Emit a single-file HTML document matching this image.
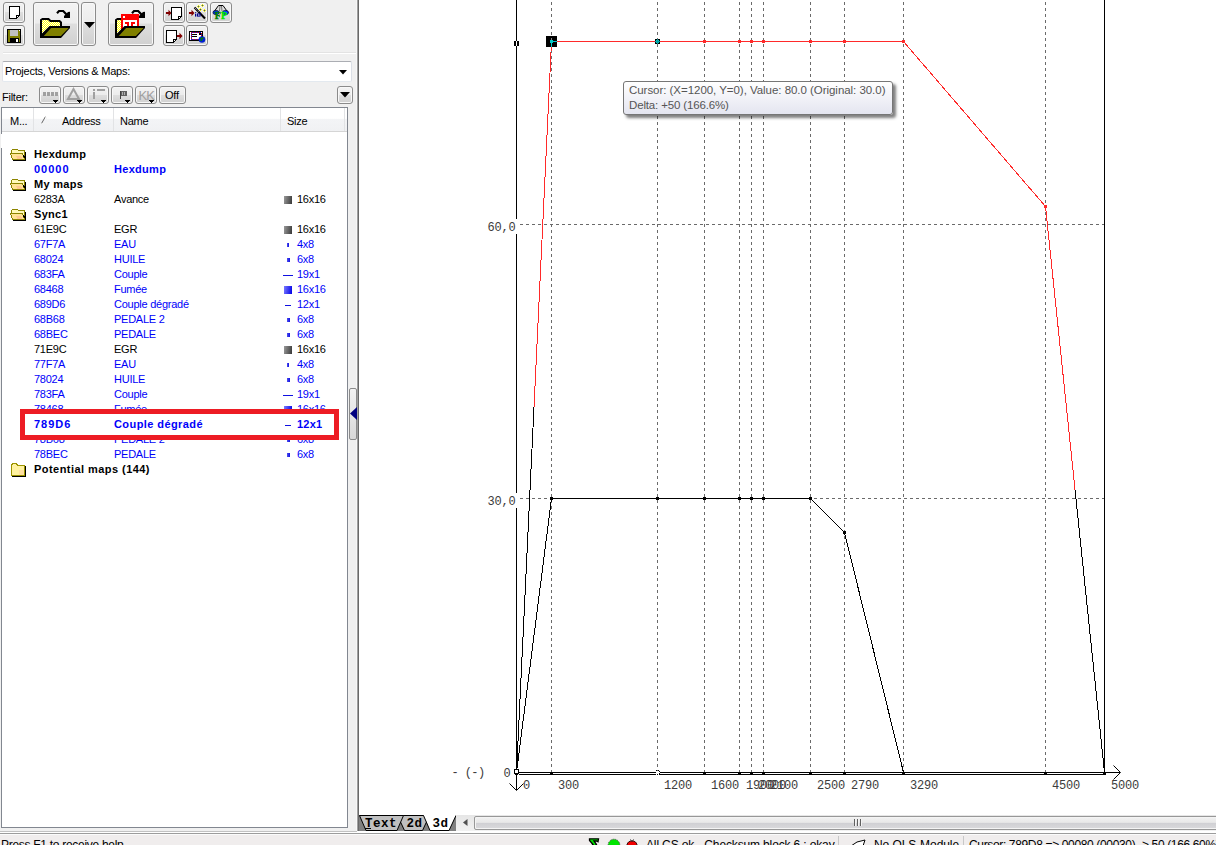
<!DOCTYPE html>
<html lang="en"><head><meta charset="utf-8"><title>WinOLS</title>
<style>
*{box-sizing:border-box;margin:0;padding:0}
html,body{width:1216px;height:845px;overflow:hidden;background:#fff}
body{position:relative;font-family:"Liberation Sans",sans-serif;font-size:11px;color:#000}
.abs{position:absolute}
#left{position:absolute;left:0;top:0;width:357px;height:831px;background:#f0f0f0}
.btn{position:absolute;border:1px solid #8b8b8b;border-radius:3px;box-shadow:inset 0 0 0 1px #f8f8f8;
 background:linear-gradient(#f3f3f3 0%,#ececec 48%,#dedede 50%,#d0d0d0 100%)}
.btn svg{position:absolute;left:0;top:0;overflow:visible}
.t{position:absolute;white-space:nowrap;line-height:15px;height:15px;letter-spacing:-.25px}
.b{letter-spacing:.3px}
.bl{color:#0000fa}
.b{font-weight:bold}
.tt{font-size:11.500px;color:#555;letter-spacing:0}
.st .t{font-size:12px;line-height:14px}
.mono{font-family:"Liberation Mono",monospace}
</style></head>
<body>
<div id="left">
<div class="btn" style="left:3px;top:2px;width:22px;height:21px;"><svg width="20" height="19" viewBox="0 0 20 19" shape-rendering="crispEdges"><path d="M5.5 3.5h10v9l-3 3h-7z" fill="#fff" stroke="#000"/><path d="M12.5 15v-2.5h3" fill="none" stroke="#000"/></svg></div>
<div class="btn" style="left:3px;top:25px;width:22px;height:21px;"><svg width="20" height="19" viewBox="0 0 20 19" shape-rendering="crispEdges"><rect x="3.5" y="3.5" width="13" height="13" fill="#808000" stroke="#000"/><rect x="6" y="4" width="8" height="6" fill="#c0c0c0"/><rect x="6" y="12" width="9" height="4" fill="#000"/><rect x="12" y="13" width="2" height="3" fill="#fff"/><rect x="15" y="4" width="1" height="1" fill="#fff"/></svg></div>
<div class="btn" style="left:33px;top:2px;width:46px;height:44px;"><svg width="44" height="42" viewBox="0 0 44 42" shape-rendering="crispEdges"><defs><pattern id="dz" width="2" height="2" patternUnits="userSpaceOnUse"><rect width="2" height="2" fill="#fff"/><rect width="1" height="1" fill="#ff0"/><rect x="1" y="1" width="1" height="1" fill="#ff0"/></pattern></defs><path d="M8 17h6l2 2h10v5h-10l-8 9z" fill="url(#dz)"/><path d="M7 34V17L8.500 16H14.500L16.500 18H25.500L27 19.500V24" fill="none" stroke="#000" stroke-width="2" shape-rendering="auto"/><path d="M6 35V32.500L15.500 23H36V25L27 35z" fill="#000" shape-rendering="auto"/><path d="M9.800 33L17.100 25H34.700L26.900 33z" fill="#808000" shape-rendering="auto"/><path d="M23 10.200L25 8H29.200L33.500 12.500" fill="none" stroke="#000" stroke-width="2.200" shape-rendering="auto"/><path d="M36 8.800V15H30V13L34 9z" fill="#000" shape-rendering="auto"/></svg></div>
<div class="btn" style="left:81px;top:2px;width:15px;height:44px;"><svg width="13" height="42" viewBox="0 0 13 42" shape-rendering="crispEdges"><path d="M2 19h11l-5.500 6z" fill="#000" shape-rendering="auto"/></svg></div>
<div class="btn" style="left:108px;top:2px;width:46px;height:44px;"><svg width="44" height="42" viewBox="0 0 44 42" shape-rendering="crispEdges"><rect x="8" y="17" width="5" height="16" fill="url(#dz)"/><path d="M7 34V17L8.500 16H13" fill="none" stroke="#000" stroke-width="2" shape-rendering="auto"/><path d="M23 10.200L25 8H29.200L33.500 12.500" fill="none" stroke="#000" stroke-width="2.200" shape-rendering="auto"/><path d="M36 8.800V15H30V13L34 9z" fill="#000" shape-rendering="auto"/><rect x="12" y="11" width="18" height="20" fill="#f00"/><rect x="14" y="13" width="2" height="2" fill="#fff"/><rect x="14" y="17" width="14" height="8" fill="#fff"/><rect x="16" y="19" width="4" height="2" fill="#f00"/><rect x="18" y="19" width="2" height="5" fill="#f00"/><rect x="22" y="19" width="4" height="2" fill="#f00"/><rect x="22" y="19" width="2" height="5" fill="#f00"/><path d="M6 35V32.500L15.500 23H36V25L27 35z" fill="#000" shape-rendering="auto"/><path d="M9.800 33L17.100 25H34.700L26.900 33z" fill="#808000" shape-rendering="auto"/></svg></div>
<div class="btn" style="left:163px;top:2px;width:22px;height:21px;"><svg width="20" height="19" viewBox="0 0 20 19" shape-rendering="crispEdges"><path d="M2 9h2.500v-2.200l3 3.200l-3 3.200v-2.200h-2.500z" fill="#800000" shape-rendering="auto"/><path d="M7.5 4.5h10v9l-3 3h-7z" fill="#fff" stroke="#000"/><path d="M14.5 16v-2.5h3" fill="none" stroke="#000"/></svg></div>
<div class="btn" style="left:186px;top:2px;width:22px;height:21px;"><svg width="20" height="19" viewBox="0 0 20 19" shape-rendering="crispEdges"><path d="M2 9h2.500v-2.200l3 3.200l-3 3.200v-2.200h-2.500z" fill="#800000" shape-rendering="auto"/><path d="M7.500 4.500l10.500 11" stroke="#000" stroke-width="2" shape-rendering="auto"/><path d="M8 5l4 4.200" stroke="#fff" stroke-width=".8" stroke-dasharray="1 1" shape-rendering="auto"/><rect x="8" y="9.200" width="1.300" height="1" fill="#000090" shape-rendering="auto"/><rect x="8" y="10.800" width="1.300" height="2.800" fill="#000090" shape-rendering="auto"/><rect x="10.500" y="10.900" width="2.600" height="2.200" fill="none" stroke="#000090" shape-rendering="auto"/><path d="M10 3h3v1h-3zM11 2h1v3h-1z" fill="#f0f000"/><rect x="11" y="3" width="1" height="1" fill="#2030c0"/><path d="M14 2h3v1h-3zM15 1h1v3h-1z" fill="#f0f000"/><rect x="15" y="2" width="1" height="1" fill="#2030c0"/><path d="M12 6h3v1h-3zM13 5h1v3h-1z" fill="#f0f000"/><rect x="13" y="6" width="1" height="1" fill="#2030c0"/><path d="M16 7h3v1h-3zM17 6h1v3h-1z" fill="#f0f000"/><rect x="17" y="7" width="1" height="1" fill="#2030c0"/></svg></div>
<div class="btn" style="left:210px;top:2px;width:22px;height:21px;"><svg width="20" height="19" viewBox="0 0 20 19" shape-rendering="crispEdges"><path d="M2.500 9.500L7.500 2.500H12L17 9.500" fill="#e0e0e0" stroke="#000" shape-rendering="auto"/><path d="M9 3L8.500 8M10.500 3L11 8" stroke="#555" stroke-width=".8" fill="none" shape-rendering="auto"/><rect x="2" y="7.500" width="6" height="4" rx="2" fill="#0030ff" stroke="#000" stroke-width=".6" shape-rendering="auto"/><rect x="11.500" y="7.500" width="6" height="4" rx="2" fill="#0030ff" stroke="#000" stroke-width=".6" shape-rendering="auto"/><text x="3.800" y="15.800" font-family="Liberation Serif,serif" font-weight="bold" font-size="10" shape-rendering="auto" stroke-width=".4"><tspan fill="#008000" stroke="#008000">F</tspan><tspan fill="#00e800" stroke="#00e800">P</tspan></text></svg></div>
<div class="btn" style="left:163px;top:25px;width:22px;height:21px;"><svg width="20" height="19" viewBox="0 0 20 19" shape-rendering="crispEdges"><path d="M2.5 4.5h10v9l-3 3h-7z" fill="#fff" stroke="#000"/><path d="M9.5 16v-2.5h3" fill="none" stroke="#000"/><path d="M13 9h2.500v-2.200l3 3.200l-3 3.200v-2.200h-2.500z" fill="#800000" shape-rendering="auto"/></svg></div>
<div class="btn" style="left:186px;top:25px;width:22px;height:21px;"><svg width="20" height="19" viewBox="0 0 20 19" shape-rendering="crispEdges"><rect x="2.500" y="5.500" width="13" height="9" fill="#fff" stroke="#000"/><rect x="4" y="6.500" width="10" height="7" fill="none" stroke="#e00000" stroke-dasharray="1 1"/><rect x="4" y="6.500" width="10" height="7" fill="none" stroke="#0020e0" stroke-dasharray="1 1" stroke-dashoffset="1"/><rect x="5" y="8" width="5" height="1" fill="#000"/><rect x="5" y="10" width="5" height="1" fill="#000"/><rect x="12" y="7" width="2" height="2" fill="#000"/><circle cx="15" cy="13.500" r="3.300" fill="#0020d0" shape-rendering="auto"/><path d="M13.500 11.500h3v1.500h-1.500v2h-1.500z" fill="#008000" shape-rendering="auto"/></svg></div>
<div class="abs" style="left:3px;top:53px;width:353px;height:1px;background:#fff"></div>
<div class="abs" style="left:3px;top:52px;width:353px;height:1px;background:#e3e3e3"></div>
<div class="abs" style="left:2px;top:61px;width:350px;height:21px;background:#fff;border:1px solid #abadb3;border-radius:2px;border-color:#abadb3 #dbdfe6 #e3e9ef #e2e3ea"></div>
<div class="t" style="left:5px;top:64px;font-size:11px">Projects, Versions &amp; Maps:</div>
<svg class="abs" style="left:339px;top:70px" width="8" height="5"><path d="M0 0h8l-4 4.500z" fill="#000"/></svg>
<div class="t" style="left:2px;top:90px">Filter:</div>
<div class="btn" style="left:39px;top:86px;width:22px;height:18px;"><svg width="20" height="16" viewBox="0 0 20 16" shape-rendering="crispEdges"><rect x="3" y="5" width="3" height="4" fill="#a0a0a0"/><rect x="7" y="5" width="3" height="4" fill="#a0a0a0"/><rect x="11" y="5" width="3" height="4" fill="#a0a0a0"/><rect x="15" y="5" width="3" height="4" fill="#a0a0a0"/><path d="M13 13h5l-2.500 3z" fill="#000"/></svg></div>
<div class="btn" style="left:63px;top:86px;width:22px;height:18px;"><svg width="20" height="16" viewBox="0 0 20 16" shape-rendering="crispEdges"><path d="M4 12l5.500-10l5.500 10z" fill="none" stroke="#a0a0a0" stroke-width="2" shape-rendering="auto"/><path d="M13 13h5l-2.500 3z" fill="#000"/></svg></div>
<div class="btn" style="left:87px;top:86px;width:22px;height:18px;"><svg width="20" height="16" viewBox="0 0 20 16" shape-rendering="crispEdges"><rect x="5" y="2" width="2" height="2" fill="#a0a0a0"/><rect x="5" y="5" width="2" height="7" fill="#a0a0a0"/><rect x="9" y="2" width="8" height="1.500" fill="#a0a0a0"/><path d="M13 13h5l-2.500 3z" fill="#000"/></svg></div>
<div class="btn" style="left:111px;top:86px;width:22px;height:18px;"><svg width="20" height="16" viewBox="0 0 20 16" shape-rendering="crispEdges"><rect x="8" y="4" width="1" height="8" fill="#404040"/><rect x="9" y="4" width="6" height="5" fill="#606060"/><rect x="10" y="5" width="1" height="3" fill="#b0b0b0"/><rect x="12" y="5" width="1" height="3" fill="#b0b0b0"/><path d="M13 13h5l-2.500 3z" fill="#000"/></svg></div>
<div class="btn" style="left:135px;top:86px;width:22px;height:18px;"><svg width="20" height="16" viewBox="0 0 20 16" shape-rendering="crispEdges"><text x="2.500" y="12.500" font-family="Liberation Sans,sans-serif" font-size="13" fill="#a0a0a0" letter-spacing="-1" shape-rendering="auto">KK</text><path d="M13 13h5l-2.500 3z" fill="#000"/></svg></div>
<div class="btn" style="left:159px;top:86px;width:27px;height:18px;"><div class="t" style="left:5px;top:0px;line-height:16px;font-size:11px">Off</div></div>
<div class="btn" style="left:337px;top:86px;width:16px;height:18px;"><svg width="14" height="16" viewBox="0 0 14 16" shape-rendering="crispEdges"><path d="M2 5h10l-5 5.500z" fill="#000" shape-rendering="auto"/></svg></div>
<div class="abs" style="left:1px;top:107px;width:347px;height:721px;background:#fff;border:1px solid #828790"></div>
<div class="abs" style="left:2px;top:108px;width:345px;height:24px;background:linear-gradient(#fff 0%,#fff 45%,#f3f4f6 50%,#f0f1f3 100%);border-bottom:1px solid #d5d5d5"></div>
<div class="abs" style="left:33px;top:108px;width:1px;height:23px;background:#e2e3e5"></div>
<div class="abs" style="left:113px;top:108px;width:1px;height:23px;background:#e2e3e5"></div>
<div class="abs" style="left:280px;top:108px;width:1px;height:23px;background:#e2e3e5"></div>
<div class="abs" style="left:344px;top:108px;width:1px;height:23px;background:#e2e3e5"></div>
<div class="t" style="left:10px;top:114px">M...</div>
<div class="t" style="left:62px;top:114px">Address</div>
<div class="t" style="left:120px;top:114px">Name</div>
<div class="t" style="left:287px;top:114px">Size</div>
<svg class="abs" style="left:40px;top:115px" width="10" height="10"><path d="M1.500 8.500l4-7" stroke="#666" fill="none"/><path d="M5.500 1.500l3.500 7h-7.500" stroke="#f4f4f4" fill="none"/></svg>
<div class="abs" style="left:1px;top:134px;width:1px;height:14px;background:#fff"></div>
<svg class="abs" style="left:10px;top:147px" width="17" height="15" viewBox="0 0 17 15" shape-rendering="crispEdges"><path d="M1.500 7V3.500l1-1h5l1 1h6v8.500h-12z" fill="#fff9b8" stroke="#8c8400"/><path d="M0.500 6.500h12l2 6h-12z" fill="#ffe494" stroke="#8c8400"/><path d="M6 9h5l1.500 3h-5z" fill="#ffc890"/><path d="M3 13.500h12.500v-9" fill="none" stroke="#000"/><path d="M13.500 8l1 3" fill="none" stroke="#000"/></svg>
<div class="t b" style="left:34px;top:147px">Hexdump</div>
<div class="t b bl" style="left:34px;top:162px;letter-spacing:1px">00000</div>
<div class="t b bl" style="left:114px;top:162px;letter-spacing:.3px">Hexdump</div>
<svg class="abs" style="left:10px;top:177px" width="17" height="15" viewBox="0 0 17 15" shape-rendering="crispEdges"><path d="M1.500 7V3.500l1-1h5l1 1h6v8.500h-12z" fill="#fff9b8" stroke="#8c8400"/><path d="M0.500 6.500h12l2 6h-12z" fill="#ffe494" stroke="#8c8400"/><path d="M6 9h5l1.500 3h-5z" fill="#ffc890"/><path d="M3 13.500h12.500v-9" fill="none" stroke="#000"/><path d="M13.500 8l1 3" fill="none" stroke="#000"/></svg>
<div class="t b" style="left:34px;top:177px">My maps</div>
<div class="t" style="left:34px;top:192px">6283A</div>
<div class="t" style="left:114px;top:192px">Avance</div>
<div class="abs" style="left:284px;top:196px;width:8px;height:8px;background:linear-gradient(100deg,#9a9a9a,#383838)"></div>
<div class="t" style="left:297px;top:192px">16x16</div>
<svg class="abs" style="left:10px;top:207px" width="17" height="15" viewBox="0 0 17 15" shape-rendering="crispEdges"><path d="M1.500 7V3.500l1-1h5l1 1h6v8.500h-12z" fill="#fff9b8" stroke="#8c8400"/><path d="M0.500 6.500h12l2 6h-12z" fill="#ffe494" stroke="#8c8400"/><path d="M6 9h5l1.500 3h-5z" fill="#ffc890"/><path d="M3 13.500h12.500v-9" fill="none" stroke="#000"/><path d="M13.500 8l1 3" fill="none" stroke="#000"/></svg>
<div class="t b" style="left:34px;top:207px">Sync1</div>
<div class="t" style="left:34px;top:222px">61E9C</div>
<div class="t" style="left:114px;top:222px">EGR</div>
<div class="abs" style="left:284px;top:226px;width:8px;height:8px;background:linear-gradient(100deg,#9a9a9a,#383838)"></div>
<div class="t" style="left:297px;top:222px">16x16</div>
<div class="t bl" style="left:34px;top:237px">67F7A</div>
<div class="t bl" style="left:114px;top:237px">EAU</div>
<div class="abs" style="left:287px;top:243px;width:2px;height:4px;background:linear-gradient(90deg,#5050f0,#1010e0)"></div>
<div class="t bl" style="left:297px;top:237px">4x8</div>
<div class="t bl" style="left:34px;top:252px">68024</div>
<div class="t bl" style="left:114px;top:252px">HUILE</div>
<div class="abs" style="left:287px;top:258px;width:3px;height:4px;background:linear-gradient(90deg,#5050f0,#1010e0)"></div>
<div class="t bl" style="left:297px;top:252px">6x8</div>
<div class="t bl" style="left:34px;top:267px">683FA</div>
<div class="t bl" style="left:114px;top:267px">Couple</div>
<div class="abs" style="left:283px;top:275px;width:10px;height:1px;background:#1010e0"></div>
<div class="t bl" style="left:297px;top:267px">19x1</div>
<div class="t bl" style="left:34px;top:282px">68468</div>
<div class="t bl" style="left:114px;top:282px">Fumée</div>
<div class="abs" style="left:284px;top:286px;width:8px;height:8px;background:linear-gradient(100deg,#7a7aff,#0000e6)"></div>
<div class="t bl" style="left:297px;top:282px">16x16</div>
<div class="t bl" style="left:34px;top:297px">689D6</div>
<div class="t bl" style="left:114px;top:297px">Couple dégradé</div>
<div class="abs" style="left:285px;top:305px;width:6px;height:1px;background:#1010e0"></div>
<div class="t bl" style="left:297px;top:297px">12x1</div>
<div class="t bl" style="left:34px;top:312px">68B68</div>
<div class="t bl" style="left:114px;top:312px">PEDALE 2</div>
<div class="abs" style="left:287px;top:318px;width:3px;height:4px;background:linear-gradient(90deg,#5050f0,#1010e0)"></div>
<div class="t bl" style="left:297px;top:312px">6x8</div>
<div class="t bl" style="left:34px;top:327px">68BEC</div>
<div class="t bl" style="left:114px;top:327px">PEDALE</div>
<div class="abs" style="left:287px;top:333px;width:3px;height:4px;background:linear-gradient(90deg,#5050f0,#1010e0)"></div>
<div class="t bl" style="left:297px;top:327px">6x8</div>
<div class="t" style="left:34px;top:342px">71E9C</div>
<div class="t" style="left:114px;top:342px">EGR</div>
<div class="abs" style="left:284px;top:346px;width:8px;height:8px;background:linear-gradient(100deg,#9a9a9a,#383838)"></div>
<div class="t" style="left:297px;top:342px">16x16</div>
<div class="t bl" style="left:34px;top:357px">77F7A</div>
<div class="t bl" style="left:114px;top:357px">EAU</div>
<div class="abs" style="left:287px;top:363px;width:2px;height:4px;background:linear-gradient(90deg,#5050f0,#1010e0)"></div>
<div class="t bl" style="left:297px;top:357px">4x8</div>
<div class="t bl" style="left:34px;top:372px">78024</div>
<div class="t bl" style="left:114px;top:372px">HUILE</div>
<div class="abs" style="left:287px;top:378px;width:3px;height:4px;background:linear-gradient(90deg,#5050f0,#1010e0)"></div>
<div class="t bl" style="left:297px;top:372px">6x8</div>
<div class="t bl" style="left:34px;top:387px">783FA</div>
<div class="t bl" style="left:114px;top:387px">Couple</div>
<div class="abs" style="left:283px;top:395px;width:10px;height:1px;background:#1010e0"></div>
<div class="t bl" style="left:297px;top:387px">19x1</div>
<div class="t bl" style="left:34px;top:402px">78468</div>
<div class="t bl" style="left:114px;top:402px">Fumée</div>
<div class="abs" style="left:284px;top:406px;width:8px;height:8px;background:linear-gradient(100deg,#7a7aff,#0000e6)"></div>
<div class="t bl" style="left:297px;top:402px">16x16</div>
<div class="abs" style="left:20px;top:409px;width:319px;height:31px;border:5px solid #ed1c24;background:#fff"></div>
<div class="t b bl" style="left:34px;top:417px;letter-spacing:1px">789D6</div>
<div class="t b bl" style="left:114px;top:417px;letter-spacing:.42px">Couple dégradé</div>
<div class="abs" style="left:285px;top:425px;width:6px;height:1px;background:#1010e0"></div>
<div class="t b bl" style="left:297px;top:417px;letter-spacing:.2px">12x1</div>
<div class="t bl" style="left:34px;top:432px">78B68</div>
<div class="t bl" style="left:114px;top:432px">PEDALE 2</div>
<div class="abs" style="left:287px;top:438px;width:3px;height:4px;background:linear-gradient(90deg,#5050f0,#1010e0)"></div>
<div class="t bl" style="left:297px;top:432px">6x8</div>
<div class="t bl" style="left:34px;top:447px">78BEC</div>
<div class="t bl" style="left:114px;top:447px">PEDALE</div>
<div class="abs" style="left:287px;top:453px;width:3px;height:4px;background:linear-gradient(90deg,#5050f0,#1010e0)"></div>
<div class="t bl" style="left:297px;top:447px">6x8</div>
<svg class="abs" style="left:10px;top:462px" width="17" height="15" viewBox="0 0 17 15" shape-rendering="crispEdges"><path d="M1.500 13.500v-10l1-2h4l1 2h7v10z" fill="#fff2a0" stroke="#9c9400"/><path d="M9 8h5v5h-5z" fill="#ffe0a0"/><path d="M2 14.500h13.500v-10.500" fill="none" stroke="#000"/></svg>
<div class="t b" style="left:34px;top:462px;letter-spacing:.45px">Potential maps (144)</div>
<div class="abs" style="left:20px;top:435px;width:319px;height:5px;background:#ed1c24"></div>
<div class="abs" style="left:25px;top:431px;width:309px;height:4px;background:#fff"></div>
</div>
<div class="abs" style="left:356px;top:0;width:1px;height:831px;background:#f7f7f7"></div><div class="abs" style="left:357px;top:0;width:1px;height:831px;background:#a0a0a0"></div><div class="abs" style="left:358px;top:0;width:1px;height:831px;background:#696969"></div>
<div class="abs" style="left:349px;top:388px;width:8px;height:52px;border:1px solid #8b8b8b;border-radius:2px;background:linear-gradient(#f3f3f3,#d8d8d8)"></div>
<svg class="abs" style="left:350px;top:407px" width="7" height="13"><path d="M0 6.500l7-6.500v13z" fill="#000080"/></svg>
<svg class="abs" style="left:359px;top:0" width="857" height="814" viewBox="359 0 857 814" shape-rendering="crispEdges" font-family="Liberation Mono,monospace" font-size="12" letter-spacing="-.2">
<path d="M551.5 0V772" stroke="#6a6a6a" stroke-dasharray="3 3" stroke-dashoffset="4" fill="none"/>
<path d="M657.5 0V772" stroke="#6a6a6a" stroke-dasharray="3 3" stroke-dashoffset="4" fill="none"/>
<path d="M704.5 0V772" stroke="#6a6a6a" stroke-dasharray="3 3" stroke-dashoffset="4" fill="none"/>
<path d="M739.5 0V772" stroke="#6a6a6a" stroke-dasharray="3 3" stroke-dashoffset="4" fill="none"/>
<path d="M751.5 0V772" stroke="#6a6a6a" stroke-dasharray="3 3" stroke-dashoffset="4" fill="none"/>
<path d="M763.5 0V772" stroke="#6a6a6a" stroke-dasharray="3 3" stroke-dashoffset="4" fill="none"/>
<path d="M810.5 0V772" stroke="#6a6a6a" stroke-dasharray="3 3" stroke-dashoffset="4" fill="none"/>
<path d="M844.5 0V772" stroke="#6a6a6a" stroke-dasharray="3 3" stroke-dashoffset="4" fill="none"/>
<path d="M903.5 0V772" stroke="#6a6a6a" stroke-dasharray="3 3" stroke-dashoffset="4" fill="none"/>
<path d="M1045.5 0V772" stroke="#6a6a6a" stroke-dasharray="3 3" stroke-dashoffset="4" fill="none"/>
<path d="M520 498.5H1104" stroke="#6a6a6a" stroke-dasharray="3 3" fill="none"/>
<path d="M520 224.5H1104" stroke="#6a6a6a" stroke-dasharray="3 3" fill="none"/>
<path d="M516.500 0V790" stroke="#000" fill="none"/>
<path d="M1104.500 0V772" stroke="#000" fill="none"/>
<path d="M516 772.500H1120M519 774.500H1106" stroke="#000" fill="none"/>
<path d="M509.500 783.500l7 7l7-7M1113.500 765.500l7 7l-7 7" stroke="#000" fill="none" shape-rendering="auto"/>
<polyline points="516.5,772.5 551.5,498.5 657.5,498.5 704.5,498.5 739.5,498.5 751.5,498.5 763.5,498.5 810.5,498.5 844.5,532.5 903.5,772.5 1045.5,772.5 1104.5,772.5" stroke="#000" fill="none"/>
<polyline points="516.5,772.5 534.0,407.0" stroke="#000" fill="none"/>
<polyline points="1075.0,489.5 1104.5,772.5" stroke="#000" fill="none"/>
<polyline points="534.0,407.0 551.5,41.5 657.5,41.5 704.5,41.5 739.5,41.5 751.5,41.5 763.5,41.5 810.5,41.5 844.5,41.5 903.5,41.5 1045.5,206.5 1075.0,489.5" stroke="#ff2a2a" fill="none"/>
<rect x="550" y="497" width="3" height="3" fill="#000"/>
<rect x="656" y="497" width="3" height="3" fill="#000"/>
<rect x="703" y="497" width="3" height="3" fill="#000"/>
<rect x="738" y="497" width="3" height="3" fill="#000"/>
<rect x="750" y="497" width="3" height="3" fill="#000"/>
<rect x="762" y="497" width="3" height="3" fill="#000"/>
<rect x="809" y="497" width="3" height="3" fill="#000"/>
<rect x="843" y="531" width="3" height="3" fill="#000"/>
<rect x="902" y="772" width="3" height="3" fill="#000"/>
<rect x="1044" y="772" width="3" height="3" fill="#000"/>
<rect x="1103" y="772" width="3" height="3" fill="#000"/>
<rect x="703" y="40" width="3" height="3" fill="#ff2a2a"/>
<rect x="738" y="40" width="3" height="3" fill="#ff2a2a"/>
<rect x="750" y="40" width="3" height="3" fill="#ff2a2a"/>
<rect x="762" y="40" width="3" height="3" fill="#ff2a2a"/>
<rect x="809" y="40" width="3" height="3" fill="#ff2a2a"/>
<rect x="843" y="40" width="3" height="3" fill="#ff2a2a"/>
<rect x="902" y="40" width="3" height="3" fill="#ff2a2a"/>
<rect x="1044" y="205" width="3" height="3" fill="#ff2a2a"/>
<rect x="546" y="36" width="11" height="11" fill="#000"/>
<rect x="551" y="38" width="1" height="2" fill="#888"/>
<path d="M551.500 43v4M553 41.500h4" stroke="#00c8c8" fill="none"/><rect x="550" y="40" width="3" height="3" fill="#00c8c8"/>
<rect x="655" y="39" width="5" height="5" fill="#000"/><rect x="656" y="40" width="3" height="3" fill="#00c0c0"/><rect x="657" y="39" width="1" height="5" fill="#00a0a0"/><rect x="655" y="41" width="5" height="1" fill="#00a0a0"/>
<rect x="514" y="41" width="5" height="5" fill="#000"/><rect x="516" y="41" width="1" height="5" fill="#fff"/>
<rect x="550" y="772" width="3" height="3" fill="#000"/>
<rect x="703" y="772" width="3" height="3" fill="#000"/>
<rect x="738" y="772" width="3" height="3" fill="#000"/>
<rect x="750" y="772" width="3" height="3" fill="#000"/>
<rect x="762" y="772" width="3" height="3" fill="#000"/>
<rect x="809" y="772" width="3" height="3" fill="#000"/>
<rect x="843" y="772" width="3" height="3" fill="#000"/>
<rect x="902" y="772" width="3" height="3" fill="#000"/>
<rect x="1044" y="772" width="3" height="3" fill="#000"/>
<rect x="1103" y="772" width="3" height="3" fill="#000"/>
<rect x="514.500" y="769.500" width="4" height="4" fill="#fff" stroke="#000"/><rect x="515" y="773" width="3" height="2" fill="#000"/>
<rect x="655.500" y="770.500" width="4" height="4" fill="#fff" stroke="#000" stroke-dasharray="1 1"/>
<g fill="#3c3c3c" shape-rendering="auto">
<text x="523" y="789">0</text>
<text x="558" y="789">300</text>
<text x="664" y="789">1200</text>
<text x="711" y="789">1600</text>
<text x="746" y="789">1900</text>
<text x="758" y="789">2000</text>
<text x="770" y="789">2100</text>
<text x="817" y="789">2500</text>
<text x="851" y="789">2790</text>
<text x="910" y="789">3290</text>
<text x="1052" y="789">4500</text>
<text x="1111" y="789">5000</text>
<rect x="486" y="219" width="31" height="15" fill="#fff"/><rect x="486" y="493" width="31" height="15" fill="#fff"/>
<text x="515.500" y="231" text-anchor="end">60,0</text>
<text x="515.500" y="505" text-anchor="end">30,0</text>
<text x="510.500" y="777" text-anchor="end">0</text>
<text x="451.500" y="776" letter-spacing="-.6">- (-)</text>
</g>
</svg>
<div class="abs" style="left:623px;top:81px;width:270px;height:34px;border:1px solid #767676;border-radius:3px;background:linear-gradient(#fff,#e4e5f0);box-shadow:3px 3px 3px rgba(0,0,0,.5)"></div>
<div class="t tt" style="left:629px;top:83px;letter-spacing:-.04px">Cursor: (X=1200, Y=0), Value: 80.0 (Original: 30.0)</div>
<div class="t tt" style="left:629px;top:98px;letter-spacing:-.15px">Delta: +50 (166.6%)</div>
<div class="abs" style="left:456px;top:815px;width:760px;height:17px;background:linear-gradient(#e6e6e6,#f2f2f2)"></div>
<svg class="abs" style="left:359px;top:815px" width="97" height="16" viewBox="359 815 97 16" font-family="Liberation Mono,monospace" font-weight="bold" font-size="12.500" letter-spacing=".5"><rect x="359" y="815" width="97" height="16" fill="#808080"/><path d="M397.500 815.500h32l-7 15h-18z" fill="#c0c0c0" stroke="#000"/><path d="M359.500 815.500h44l-6.500 15h-31z" fill="#c0c0c0" stroke="#000"/><path d="M423.500 815l6.500 15.500h19l7-15.500z" fill="#fff"/><path d="M423.500 815.500l6.500 15h19l7-15" fill="none" stroke="#000"/><text x="365" y="827">Text</text><rect x="365" y="828" width="6" height="1" fill="#000"/><text x="406.500" y="827">2d</text><text x="432.500" y="827">3d</text></svg>
<svg class="abs" style="left:462px;top:819px" width="6" height="8"><path d="M5.500 0v7l-4.500-3.500z" fill="#505050"/></svg>
<div class="abs" style="left:474px;top:816px;width:750px;height:14px;border:1px solid #979797;border-radius:2px;box-shadow:inset 0 0 0 1px #f4f4f4;background:linear-gradient(#f2f2f2 0%,#e8e8e8 45%,#d0d0d4 52%,#dadadc 100%)"></div>
<div class="abs" style="left:854px;top:819px;width:8px;height:7px;background:repeating-linear-gradient(90deg,#606060 0,#606060 1px,#f4f4f4 1px,#f4f4f4 2px,transparent 2px,transparent 3px)"></div>
<div class="abs" style="left:0;top:831px;width:357px;height:1px;background:#c2c2c2"></div>
<div class="abs" style="left:359px;top:831px;width:857px;height:1px;background:#fff"></div>
<div class="abs" style="left:0;top:832px;width:1216px;height:1px;background:#fff"></div>
<div class="abs" style="left:0;top:833px;width:1216px;height:1px;background:#9c9c9c"></div>
<div class="abs" style="left:0;top:834px;width:1216px;height:1px;background:#fbfbfb"></div>
<div class="abs" style="left:0;top:835px;width:1216px;height:10px;background:#f0eded"></div>
<div class="abs st" style="left:0;top:838px;width:1216px;height:20px"><div class="t" style="left:1px;top:0;letter-spacing:-.29px">Press F1 to receive help</div><svg class="abs" style="left:588px;top:0px" width="52" height="10"><path d="M1.500 .800H10.500L10 3.800L8.500 3H6L8.500 6.500L5 10H1.500L5 6.500L1.500 2.500z" fill="#00e000" stroke="#000" stroke-width="1.300"/><circle cx="26" cy="7" r="5.800" fill="#00e400" stroke="#304030" stroke-dasharray="1 1"/><circle cx="44" cy="8" r="5.200" fill="#f00000" stroke="#301010"/><path d="M42.500 1.500l1.500 2l1.500-2" fill="#f0eded" stroke="#000" stroke-width=".8"/></svg><div class="t" style="left:646px;top:0;letter-spacing:-.14px">All CS ok - Checksum block 6 : okay</div><div class="abs" style="left:838px;top:-2px;width:1px;height:12px;background:#c8c8c8"></div><svg class="abs" style="left:850px;top:1px" width="17" height="8"><path d="M1 7l6-4l8-2l-2 6" fill="#fff" stroke="#000"/></svg><div class="t" style="left:874px;top:0;letter-spacing:-.08px">No OLS-Module</div><div class="abs" style="left:963px;top:-2px;width:1px;height:12px;background:#c8c8c8"></div><div class="t" style="left:969px;top:0;letter-spacing:-.35px">Cursor: 789D8 =&gt; 00080 (00030) -&gt; 50 (166.60%)</div></div>
</body></html>
